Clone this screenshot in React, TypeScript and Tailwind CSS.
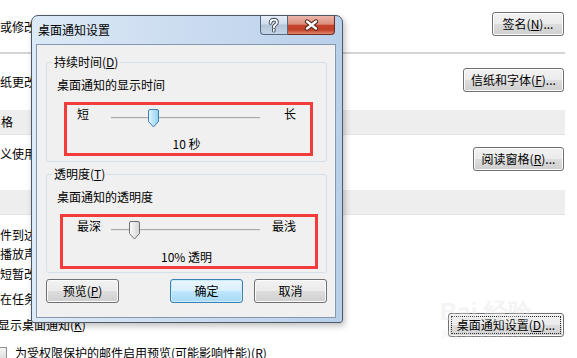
import type { ReactNode } from "react";

function WinButton({
  children,
  className = "",
  focused = false,
  focusRect = false,
}: {
  children: ReactNode;
  className?: string;
  focused?: boolean;
  focusRect?: boolean;
}) {
  const skin = focused
    ? "border-[#3c7fb1] bg-[linear-gradient(to_bottom,#eaf6fd_0%,#d9f0fc_50%,#bee6fd_51%,#a7d9f5_100%)] shadow-[inset_0_0_0_1px_#c8ecfb]"
    : "border-[#707070] bg-[linear-gradient(to_bottom,#f2f2f2_0%,#ebebeb_50%,#dddddd_51%,#cfcfcf_100%)] shadow-[inset_0_0_0_1px_#fbfbfb]";
  return (
    <div
      className={`relative flex h-[24px] shrink-0 items-center justify-center rounded-[3px] border leading-[16px] text-black ${skin} ${className}`}
    >
      {focusRect && (
        <div className="absolute inset-[2px] border border-dotted border-[#222]" />
      )}
      <span className="relative whitespace-nowrap">{children}</span>
    </div>
  );
}

function Thumb({ blue }: { blue?: boolean }) {
  const id = blue ? "thumbBlue" : "thumbGray";
  return (
    <svg width="11" height="19" viewBox="0 0 11 19">
      <defs>
        <linearGradient id={id} x1="0" y1="0" x2="1" y2="0">
          <stop offset="0" stopColor={blue ? "#e3f5fd" : "#fbfbfb"} />
          <stop offset="1" stopColor={blue ? "#8fd0f3" : "#d4d4d4"} />
        </linearGradient>
      </defs>
      <path
        d="M2 0.5 H9 Q10.5 0.5 10.5 2 V12.5 L5.5 18 L0.5 12.5 V2 Q0.5 0.5 2 0.5 Z"
        fill={`url(#${id})`}
        stroke={blue ? "#3c7fb1" : "#707070"}
      />
    </svg>
  );
}

function SliderBox({
  boxClass,
  left,
  right,
  value,
  thumbClass,
  blue,
  valueClass,
}: {
  boxClass: string;
  left: string;
  right: string;
  value: string;
  thumbClass: string;
  blue?: boolean;
  valueClass: string;
}) {
  return (
    <div className={`mt-[9px] border-[3px] border-[#f33b3b] pb-[1px] ${boxClass}`}>
      <div className="flex h-[24px] w-[219px]">
        <span className="w-[34px] pt-[1px] leading-[16px]">{left}</span>
        <div className="relative w-[149px]">
          <div className="absolute left-0 right-0 top-[12px] h-[2px] border-t border-[#a9a9a9] bg-[#e4e4e4]" />
          <div className={`absolute top-[4px] ${thumbClass}`}>
            <Thumb blue={blue} />
          </div>
        </div>
        <span className="flex-1 pt-[1px] text-right leading-[16px]">{right}</span>
      </div>
      <div className={`w-[219px] text-center leading-[16px] ${valueClass}`}>{value}</div>
    </div>
  );
}

export default function App() {
  return (
    <div className="relative h-[358px] w-[577px] overflow-hidden bg-white font-['Noto_Sans_CJK_SC','Microsoft_YaHei',sans-serif] text-[12px] text-black">
      {/* Outlook 选项页面（背景） */}
      <div className="w-[565px]">
        <div className="flex h-[52px] items-start justify-between">
          <span className="mt-[18px] whitespace-nowrap">或修改邮件签名。</span>
          <WinButton className="mr-[1px] mt-[12px] w-[72px]">
            签名(<span className="underline">N</span>)...
          </WinButton>
        </div>
        <div className="h-[2px] bg-[#d4d4d4]" />
        <div className="flex h-[56px] items-start justify-between">
          <span className="mt-[19px] whitespace-nowrap">纸更改默认字体和样式、颜色和背景。</span>
          <WinButton className="mr-[1px] mt-[14px] w-[101px]">
            信纸和字体(<span className="underline">F</span>)...
          </WinButton>
        </div>
        <div className="flex h-[25px] items-center border-b border-[#e2e2e2] bg-[#eeeeee]">
          <span className="ml-[1px]">格</span>
        </div>
        <div className="flex h-[55px] items-start justify-between">
          <span className="mt-[10px] whitespace-nowrap">义使用阅读窗格时项目的标记方式。</span>
          <WinButton className="mr-[1px] mt-[12px] w-[91px]">
            阅读窗格(<span className="underline">R</span>)...
          </WinButton>
        </div>
        <div className="h-[25px] border-b border-[#e2e2e2] bg-[#eeeeee]" />
        <div className="flex flex-col pt-[12px] leading-[16px]">
          <span className="h-[19px] whitespace-nowrap">件到达时：</span>
          <span className="h-[20px] whitespace-nowrap">播放声音(P)</span>
          <span className="h-[25px] whitespace-nowrap">短暂改变鼠标指针(C)</span>
          <span className="h-[21px] whitespace-nowrap">在任务栏中显示信封图标(V)</span>
          <div className="flex h-[26px] items-center justify-between">
            <span className="-ml-[2px] whitespace-nowrap">
              显示桌面通知(<span className="underline">K</span>)
            </span>
            <WinButton className="mr-[1px] w-[116px]" focusRect>
              桌面通知设置(<span className="underline">D</span>)...
            </WinButton>
          </div>
          <div className="mt-[7px] flex items-center">
            <div className="-ml-[6px] h-[13px] w-[13px] shrink-0 border border-[#8e8f8f] bg-[linear-gradient(to_bottom,#f4f4f4,#dedede)]" />
            <span className="ml-[8px] whitespace-nowrap">
              为受权限保护的邮件启用预览(可能影响性能)(R)
            </span>
          </div>
        </div>
      </div>

      {/* 水印 */}
      <div className="pointer-events-none absolute left-[440px] top-[298px] flex flex-col items-center text-[#e4e4e4] opacity-40">
        <span className="font-['Liberation_Sans',sans-serif] text-[24px] font-bold leading-[28px]">Bai 经验</span>
        <span className="font-['Liberation_Sans',sans-serif] text-[11px] leading-[14px]">jingyan.baidu.com</span>
      </div>

      {/* 桌面通知设置 对话框 */}
      <div className="absolute left-[31px] top-[15px] flex h-[308px] w-[312px] flex-col rounded-b-[3px] rounded-t-[7px] border border-[#4b5866] bg-[linear-gradient(to_right,#dce9f7_0%,#cbdcf0_50%,#b9d0ea_100%)] shadow-[2px_3px_6px_rgba(0,0,0,0.25)]">
        <div className="flex h-[28px] items-start">
          <span className="ml-[6px] mt-[6px] leading-[16px]">桌面通知设置</span>
          <div className="ml-auto mr-[7px] flex h-[19px]">
            <div className="w-[28px] rounded-bl-[4px] border border-t-0 border-[#58687c] bg-[linear-gradient(to_bottom,#e6eef8_0%,#cfdcec_45%,#b3c4d9_50%,#c4d4e8_100%)]">
              <svg width="26" height="18" viewBox="0 0 26 18">
                <path
                  d="M9.5 7 C9.5 4.5 11 3.6 12.8 3.6 C14.8 3.6 16 4.8 16 6.4 C16 8.4 13.3 8.8 12.8 10.8 L12.8 11.5 M12.8 13.6 V14.8"
                  fill="none"
                  stroke="#3a4656"
                  strokeWidth="3.6"
                  strokeLinecap="round"
                />
                <path
                  d="M9.5 7 C9.5 4.5 11 3.6 12.8 3.6 C14.8 3.6 16 4.8 16 6.4 C16 8.4 13.3 8.8 12.8 10.8 L12.8 11.5 M12.8 13.6 V14.8"
                  fill="none"
                  stroke="#ffffff"
                  strokeWidth="1.8"
                  strokeLinecap="round"
                />
              </svg>
            </div>
            <div className="w-[47px] rounded-br-[4px] border border-l-0 border-t-0 border-[#6e2c20] bg-[linear-gradient(to_bottom,#ecb5a9_0%,#dc8f7e_45%,#c6432b_52%,#c1412a_78%,#e08a6f_100%)]">
              <svg width="46" height="18" viewBox="0 0 46 18">
                <path
                  d="M19 5.5 L28 12.5 M28 5.5 L19 12.5"
                  stroke="#4a2019"
                  strokeWidth="4.4"
                  strokeLinecap="round"
                />
                <path
                  d="M19 5.5 L28 12.5 M28 5.5 L19 12.5"
                  stroke="#ffffff"
                  strokeWidth="2.4"
                  strokeLinecap="round"
                />
              </svg>
            </div>
          </div>
        </div>

        <div className="mb-[4px] ml-[4px] mr-[6px] flex flex-1 flex-col border border-[#8397ae] bg-[#f0f0f0] pb-[13px] pl-[9px] pr-[8px] pt-[9px]">
          <fieldset className="rounded-[3px] border border-[#d5dfe5] pb-[5px]">
            <legend className="ml-[5px] px-[2px] leading-[16px]">
              持续时间(<span className="underline">D</span>)
            </legend>
            <div className="ml-[10px] mt-[7px] leading-[16px]">桌面通知的显示时间</div>
            <SliderBox
              boxClass="ml-[17px] w-[249px] pl-[10px]"
              left="短"
              right="长"
              value="10 秒"
              thumbClass="left-[37px]"
              blue
              valueClass="mt-[7px]"
            />
          </fieldset>

          <fieldset className="mt-[4px] rounded-[3px] border border-[#d5dfe5] pb-[3px]">
            <legend className="ml-[5px] px-[2px] leading-[16px]">
              透明度(<span className="underline">T</span>)
            </legend>
            <div className="ml-[10px] mt-[7px] leading-[16px]">桌面通知的透明度</div>
            <SliderBox
              boxClass="ml-[13px] w-[258px] pl-[14px]"
              left="最深"
              right="最浅"
              value="10% 透明"
              thumbClass="left-[18px]"
              valueClass="mt-[8px]"
            />
          </fieldset>

          <div className="mt-[6px] flex">
            <WinButton className="w-[73px]">
              预览(<span className="underline">P</span>)
            </WinButton>
            <WinButton className="ml-auto w-[73px]" focused>
              确定
            </WinButton>
            <WinButton className="ml-[11px] w-[73px]">取消</WinButton>
          </div>
        </div>
      </div>
    </div>
  );
}
